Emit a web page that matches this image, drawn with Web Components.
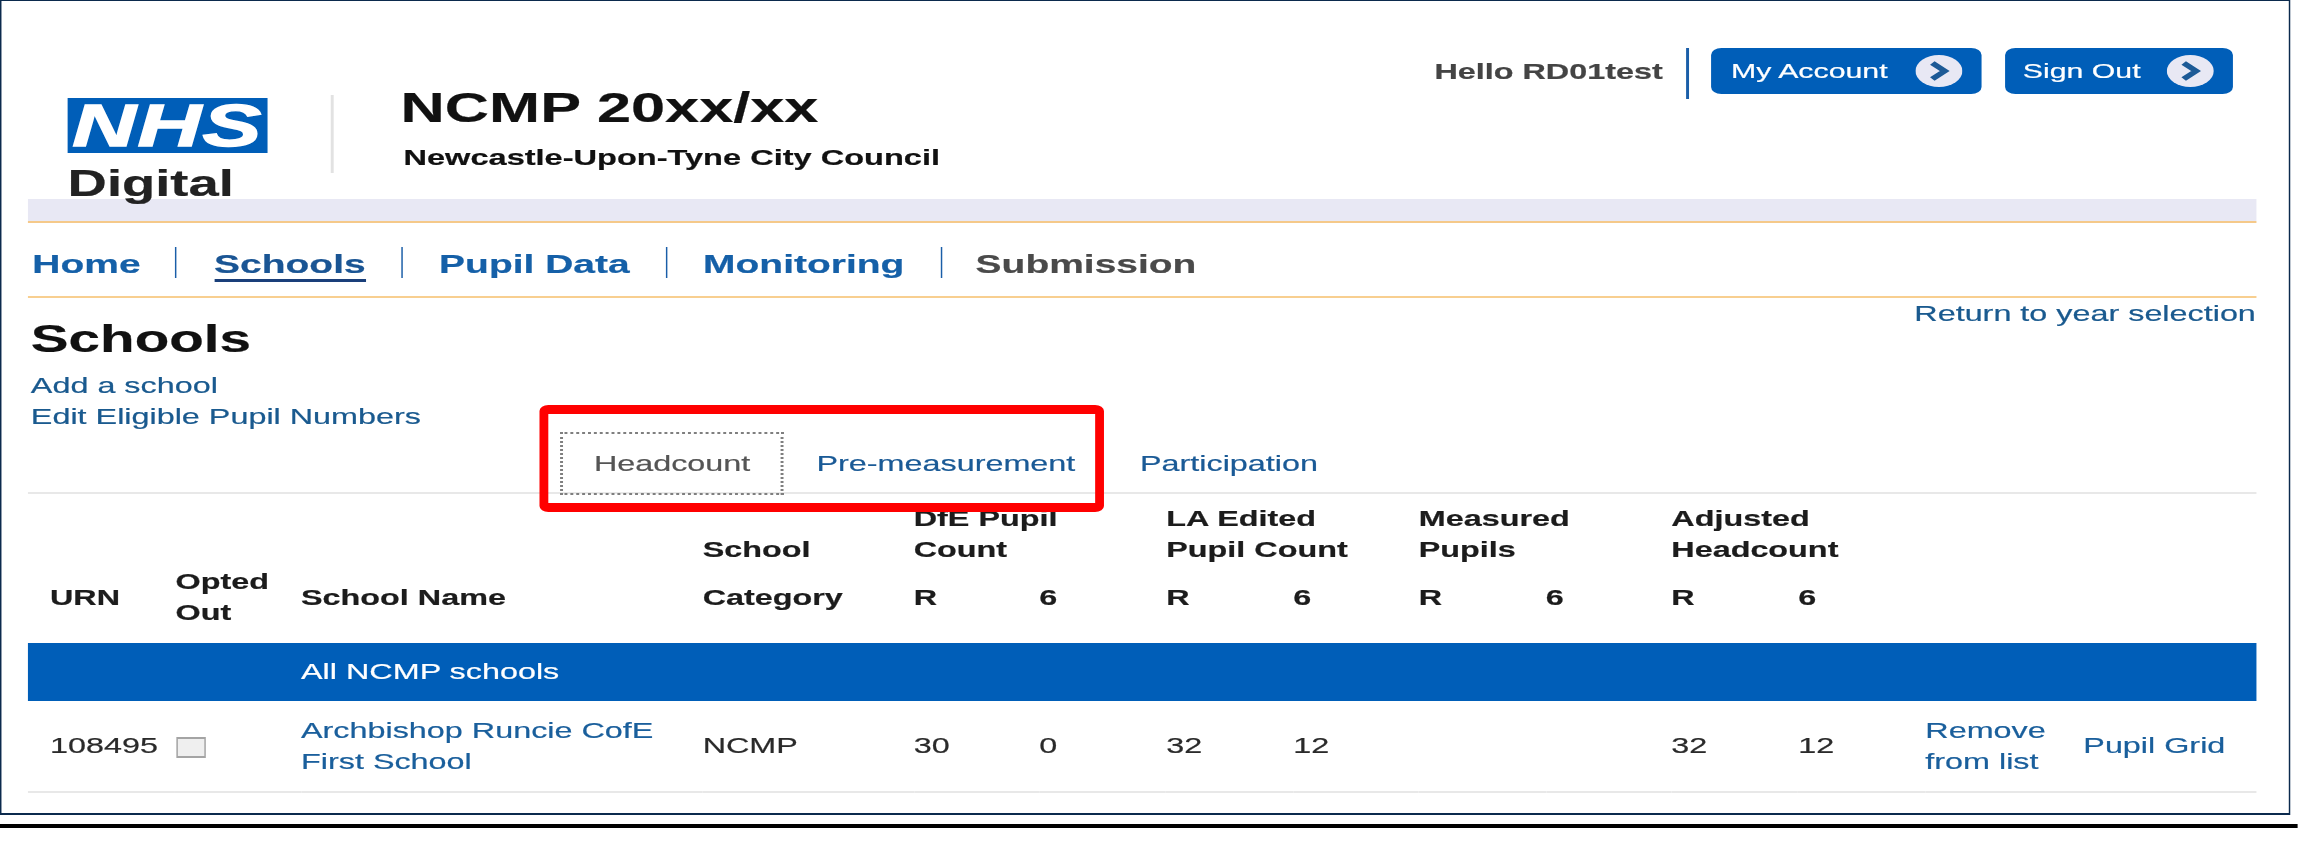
<!DOCTYPE html>
<html lang="en"><head><meta charset="utf-8"><title>NCMP Schools</title>
<style>
html,body{margin:0;padding:0;background:#fff;overflow:hidden;width:2315px;height:848px}
body{font-family:"Liberation Sans",Arial,sans-serif;font-size:22px;line-height:31px;color:#222;-webkit-text-stroke:.2px}
</style></head>
<body>
<stretch-page>
  <app-frame>
    <site-header></site-header>
    <main-nav>
      <nav-item>Home</nav-item>
      <nav-item current>Schools</nav-item>
      <nav-item>Pupil Data</nav-item>
      <nav-item>Monitoring</nav-item>
      <nav-item disabled>Submission</nav-item>
    </main-nav>
    <page-head></page-head>
    <tab-bar>
      <tab-item active>Headcount</tab-item>
      <tab-item>Pre-measurement</tab-item>
      <tab-item>Participation</tab-item>
    </tab-bar>
    <school-table></school-table>
  </app-frame>
</stretch-page>
<script>
function def(name, css, html){
  customElements.define(name, class extends HTMLElement{
    constructor(){super();const r=this.attachShadow({mode:'open'});r.innerHTML='<style>'+css+'</style>'+html;}
  });
}
def('stretch-page',
 `:host{display:block;width:1562.6px;height:848px;transform:scaleX(1.47);transform-origin:0 0;filter:blur(.4px)}
  .bar{height:4px;background:#000;margin-top:9px}`,
 `<slot></slot><div class="bar"></div>`);
def('app-frame',
 `:host{display:block;box-sizing:border-box;width:1557.8px;height:815px;border:1px solid #0b2a4d;border-width:1.5px 1px 2px 1px;padding-left:18px;background:#fff}`,
 `<slot></slot>`);
def('nhs-logo',
 `:host{display:block;width:206px;padding:96.5px 0 0 27px;box-sizing:border-box}
  .box{width:136px;height:55px;background:#005eb8;color:#fff;font:italic bold 60px/55px "Liberation Sans",Arial,sans-serif;text-align:center;letter-spacing:1px;-webkit-text-stroke:1.4px #fff}
  .d{font:bold 37px/37px "Liberation Sans",Arial,sans-serif;color:#222;margin-top:12.5px}`,
 `<div class="box">NHS</div><div class="d">Digital</div>`);
def('pill-button',
 `:host{display:flex;align-items:center;box-sizing:border-box;height:46px;background:#005eb8;border-radius:7px;color:#fff;font-size:20.6px;padding:0 13px 0 14px;gap:19px;white-space:nowrap}
  :host([tight]){padding-left:12px;gap:18px}
  svg{display:block;width:32px;height:32px;flex:none}`,
 `<slot></slot><svg viewBox="0 0 32 32"><circle cx="16" cy="16" r="16" fill="#e8e8f4"/><path d="M11.5 8l8.5 8-8.5 8" fill="none" stroke="#1d5a96" stroke-width="4.5"/></svg>`);
def('site-header',
 `:host{display:block;width:1515.6px;box-sizing:border-box;height:197.5px}
  .row{display:flex;height:100%}
  .rule{width:1.5px;height:78px;background:#e2e2e2;margin-top:93.5px}
  .title{margin-left:46px;padding-top:82.5px}
  h1{margin:0;font:bold 41.7px/48px "Liberation Sans",Arial,sans-serif;color:#111}
  p{margin:10.5px 0 0 2px;font:bold 22.15px/31px "Liberation Sans",Arial,sans-serif;color:#111;white-space:nowrap}
  .user{margin-left:auto;display:flex;align-items:flex-start;padding:46.5px 15.4px 0 0}
  .hello{font-weight:bold;color:#444;line-height:31px;margin-top:8px;white-space:nowrap}
  .sep{width:1.5px;height:51px;background:#1a5ea8;margin:0 15px 0 16px}
  pill-button+pill-button{margin-left:16px}`,
 `<div class="row"><nhs-logo></nhs-logo><div class="rule"></div>
   <div class="title"><h1>NCMP 20xx/xx</h1><p>Newcastle-Upon-Tyne City Council</p></div>
   <div class="user"><span class="hello">Hello RD01test</span><span class="sep"></span>
   <pill-button>My Account</pill-button><pill-button tight>Sign Out</pill-button></div></div>`);
def('main-nav',
 `:host{display:block;width:1515.6px}
  .band{height:22px;background:#e8e8f4}
  .nav{display:flex;align-items:center;height:77px;box-sizing:border-box;padding-top:6px;border-top:2px solid #f5c98a;border-bottom:2px solid #f8cf90}`,
 `<div class="band"></div><div class="nav"><slot></slot></div>`);
def('nav-item',
 `:host{display:block;height:31px;font:bold 26.5px/34px "Liberation Sans",Arial,sans-serif;color:#1560a8;padding:0 24.5px;border-left:1px solid #1a5ea8;white-space:nowrap}
  :host(:first-child){border-left:0;padding-left:3px;padding-right:23.5px}
  :host(:last-child){padding-left:23px}
  :host([current]){padding-left:25.5px}
  :host([current]) span{border-bottom:3px solid #1a3f7a;color:#1a5594;display:inline-block;line-height:30px;margin-top:2px}
  :host([disabled]){color:#4a4a4a}`,
 `<span><slot></slot></span>`);
def('page-head',
 `:host{display:flex;justify-content:space-between;align-items:flex-start;width:1515.6px;height:134px;color:#1a5a8f;padding-left:2px;box-sizing:border-box}
  h2{margin:21.5px 0 10.5px;font:bold 38.5px/40px "Liberation Sans",Arial,sans-serif;color:#111}
  a{display:block;color:#1a5a8f;text-decoration:none;white-space:nowrap}`,
 `<div><h2>Schools</h2><a>Add a school</a><a>Edit Eligible Pupil Numbers</a></div><a>Return to year selection</a>`);
def('tab-bar',
 `:host{display:flex;position:relative;z-index:2;width:1515.6px;border-bottom:2px solid #e8e8e8;padding-left:362px;box-sizing:border-box;height:62px}
  .red{position:absolute;left:348.3px;top:-27px;width:383.3px;height:107px;box-sizing:border-box;border:solid #f00;border-width:9px 6px;border-radius:6px;pointer-events:none}`,
 `<slot></slot><div class="red"></div>`);
def('tab-item',
 `:host{display:block;box-sizing:border-box;height:63px;padding:0 20px;line-height:59px;color:#1a5a96;white-space:nowrap;border:2px dotted transparent}
  :host([active]){border-color:#7f7f7f;color:#555;padding:0 21px}`,
 `<slot></slot>`);
def('school-table',
 `:host{display:block;width:1515.6px}
  table{border-collapse:separate;border-spacing:0;table-layout:fixed;width:1515.8px}
  th,td{padding:0;text-align:left;line-height:31px;font-size:22px}
  th{font-weight:bold;color:#1c1c1c}
  .r1 th{height:72px;vertical-align:bottom;padding-bottom:.5px;box-sizing:border-box}
  .r2 th{height:77px;vertical-align:top;padding-top:16px;box-sizing:border-box}
  .r2 th.top{padding-top:.5px}
  .band td{height:58px;background:#005eb8;color:#fff;box-sizing:border-box;padding-left:185.8px}
  .data td{height:92px;box-sizing:border-box;border-bottom:2px solid #e8e8e8;color:#2a2a2a;vertical-align:middle}
  .urn{padding-left:15px}
  a{color:#1a5f9c;text-decoration:none}
  i{display:block;box-sizing:border-box;width:20px;height:21px;background:#efefef;border:2px solid #a4a4a4;border-width:2px 1px;margin:3px 0 0 1px}`,
 `<table>
  <colgroup><col style="width:100.4px"><col style="width:85.4px"><col style="width:273.2px"><col style="width:143.6px"><col style="width:85.4px"><col style="width:86.4px"><col style="width:86.4px"><col style="width:85.4px"><col style="width:86.4px"><col style="width:85.4px"><col style="width:86.4px"><col style="width:86.4px"><col style="width:107.5px"><col style="width:117.5px"></colgroup>
  <tr class="r1"><th></th><th></th><th></th><th>School</th><th colspan="2">DfE Pupil<br>Count</th><th colspan="2">LA Edited<br>Pupil Count</th><th colspan="2">Measured<br>Pupils</th><th colspan="2">Adjusted<br>Headcount</th><th></th><th></th></tr>
  <tr class="r2"><th class="urn">URN</th><th class="top">Opted<br>Out</th><th>School Name</th><th>Category</th><th>R</th><th>6</th><th>R</th><th>6</th><th>R</th><th>6</th><th>R</th><th>6</th><th></th><th></th></tr>
  <tr class="band"><td colspan="14">All NCMP schools</td></tr>
  <tr class="data"><td class="urn">108495</td><td><i></i></td><td><a>Archbishop Runcie CofE<br>First School</a></td><td>NCMP</td><td>30</td><td>0</td><td>32</td><td>12</td><td></td><td></td><td>32</td><td>12</td><td><a>Remove<br>from list</a></td><td><a>Pupil Grid</a></td></tr>
 </table>`);
</script>
</body></html>
